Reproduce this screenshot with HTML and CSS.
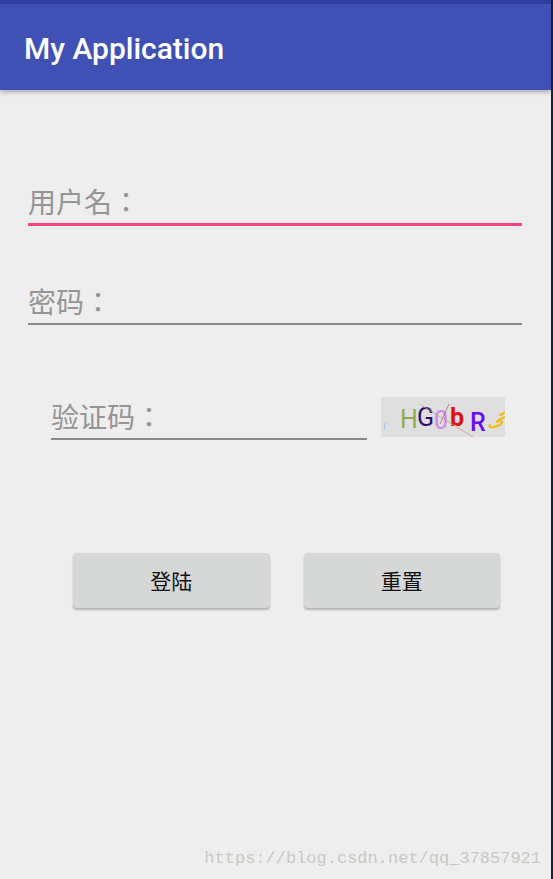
FILE: index.html
```
<!DOCTYPE html>
<html lang="zh-CN">
<head>
    <meta charset="UTF-8">
    <meta name="viewport" content="width=device-width, initial-scale=1.0">
    <title>My Application</title>
    <link rel="stylesheet" href="styles.css">
</head>
<body>
    <header class="toolbar">
        <h1 class="title">My Application</h1>
    </header>

    <!-- zh-TW centres the fullwidth colon in its cell -->
    <form class="login" lang="zh-TW">
        <input class="field focused" type="text" name="username" placeholder="用户名：" aria-label="用户名">
        <input class="field" type="password" name="password" placeholder="密码：" aria-label="密码">

        <div class="captcha-row">
            <input class="field" type="text" name="captcha" placeholder="验证码：" aria-label="验证码">
            <svg class="captcha" viewBox="0 0 124 40" role="img" aria-label="captcha">
                <path d="M5 25 Q3 28 3.5 32" stroke="#a9c3ee" stroke-width="1.2" fill="none"/>
                <text x="19" y="31" fill="#92ac4c">H</text>
                <text x="36" y="29" fill="#29106c">G</text>
                <text x="53" y="32" fill="#cf86e8">0</text>
                <text x="69" y="29" fill="#de1010" class="bold">b</text>
                <text x="89" y="34" fill="#6a0cf5" class="medium">R</text>
                <path d="M109 27 Q107 31 113 30 Q121 28 121 25 Q120 23 115 25 Q119 22 124 20" stroke="#f2b90c" stroke-width="2" fill="none"/>
                <path d="M118 18 Q121 18 124 15" stroke="#f2b90c" stroke-width="2" fill="none"/>
                <path d="M40 8 L92 40" stroke="#cf9b87" stroke-width="0.8"/>
                <path d="M68 7 L59 27" stroke="#a96a78" stroke-width="0.8"/>
            </svg>
        </div>

        <div class="buttons" lang="zh-CN">
            <button type="submit">登陆</button>
            <button type="reset">重置</button>
        </div>
    </form>

    <footer class="watermark">https://blog.csdn.net/qq_37857921</footer>
</body>
</html>
```
FILE: styles.css
```
* {
    box-sizing: border-box;
}
body {
    display: flex;
    flex-direction: column;
    min-height: 100vh;
    margin: 0;
    border-right: 2px solid #142136;
    background-color: #eeeeee;
    font-family: Roboto, "Noto Sans CJK TC", sans-serif;
}
.toolbar {
    padding: 26px 24px 22px;
    border-top: 4px solid #303f9f;
    background-color: #3f51b5;
    box-shadow: 0 2px 5px rgba(0, 0, 0, 0.3);
}
.title {
    margin: 0;
    color: #fff;
    font-size: 30px;
    font-weight: 500;
    line-height: 38px;
}
.login {
    display: flex;
    flex-direction: column;
    padding: 88px 29px 0 28px;
}
.field {
    width: 100%;
    height: 48px;
    margin: 0 0 51px;
    padding: 6px 0 0;
    border: none;
    border-bottom: 2px solid #8a8a8a;
    border-radius: 0;
    outline: none;
    background: none;
    color: #212121;
    font-family: inherit;
    font-size: 28px;
}
.field::placeholder {
    color: #959595;
    opacity: 1;
}
.field.focused {
    border-bottom: 3px solid #ff4081;
}
.captcha-row {
    display: flex;
    align-items: flex-end;
    gap: 14px;
    padding: 16px 17px 0 23px;
}
.captcha-row .field {
    flex: 1;
    min-width: 0;
    margin: 0;
}
.captcha {
    flex: none;
    width: 124px;
    height: 40px;
    margin-bottom: 3px;
    background-color: #dfdfdf;
    font-size: 25px;
}
.medium {
    font-weight: 500;
}
.bold {
    font-weight: 700;
}
.buttons {
    display: flex;
    gap: 34px;
    padding: 113px 22px 0 45px;
}
button {
    flex: 1;
    height: 55px;
    padding: 0 0 1px;
    border: none;
    border-radius: 4px;
    background-color: #d6d8d7;
    box-shadow: 0 2px 2px rgba(0, 0, 0, 0.25);
    color: #111;
    font-family: inherit;
    font-size: 21px;
    cursor: pointer;
}
.watermark {
    margin-top: auto;
    padding: 0 10px 8px;
    color: #c9c9c4;
    font-family: "Liberation Mono", monospace;
    font-size: 17px;
    line-height: 24px;
    text-align: right;
}
```
